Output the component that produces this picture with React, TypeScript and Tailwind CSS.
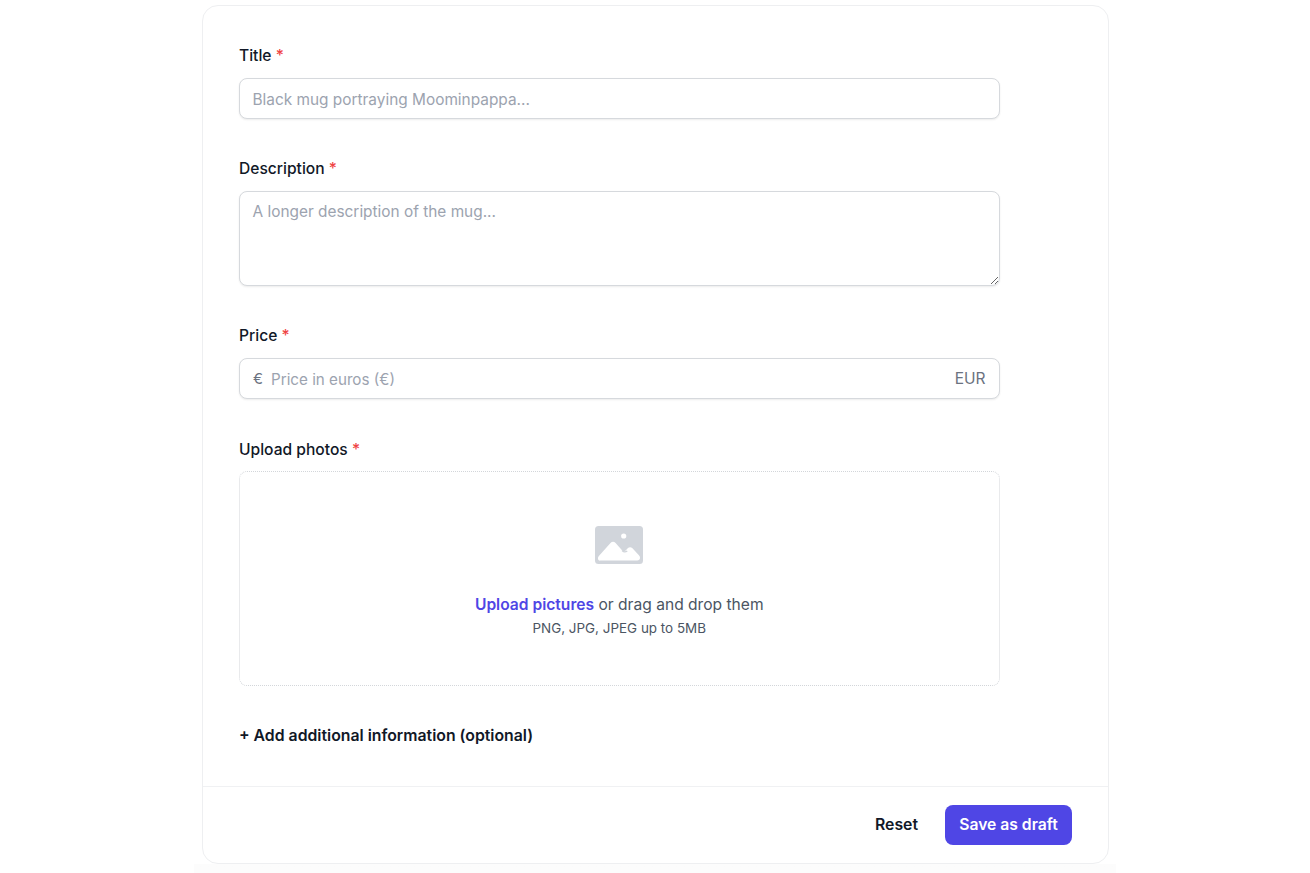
export default function App() {
  const font = "font-['Inter','Liberation_Sans',sans-serif]";
  const Label = ({ text, className = "" }: { text: string; className?: string }) => (
    <label className={`block text-[15.6px] leading-6 pt-[2px] font-medium text-[#111827] ${className}`}>
      {text} <span className="text-[#ef4444]">*</span>
    </label>
  );
  const inputBox =
    "w-full rounded-lg border border-[#d6d9dd] bg-white shadow-[0_1px_2px_rgba(0,0,0,0.08)] text-[15.4px] text-[#111827] placeholder:text-[#9ca3af] outline-none";
  return (
    <div className={`h-[873px] overflow-hidden bg-white ${font}`}>
      <div className="mx-auto w-[922px] h-[873px] bg-gradient-to-b from-white from-[99%] to-[#fcfcfc] to-[99%] px-2 pt-[5px]">
        <form className="w-[907px] h-[859px] rounded-2xl border border-[#eeeff1] bg-white flex flex-col">
          <div className="flex-1 pl-9 pr-[108.500px] pt-[36px]">
            <Label text="Title" />
            <input
              placeholder="Black mug portraying Moominpappa..."
              className={`${inputBox} mt-[10px] h-[41px] px-[12.500px] pt-[2px]`}
            />

            <Label text="Description" className="mt-[36px]" />
            <textarea
              placeholder="A longer description of the mug..."
              className={`${inputBox} mt-[10px] h-[95px] block px-[12.500px] pt-[7.500px] pb-2 leading-6 resize-y`}
            />

            <Label text="Price" className="mt-[36px]" />
            <div className={`${inputBox} mt-[10px] h-[41px] flex items-center px-[13px]`}>
              <span className="text-[#6b7280] w-[18px] text-[15px] pt-px">€</span>
              <input
                placeholder="Price in euros (€)"
                className="flex-1 min-w-0 bg-transparent outline-none pt-[3px] text-[15.2px] text-[#111827] placeholder:text-[#9ca3af]"
              />
              <span className="text-[#6b7280] text-[15.5px] pt-px">EUR</span>
            </div>

            <Label text="Upload photos" className="mt-[37px]" />
            <div className="mt-[9px] h-[215px] rounded-lg border border-dotted border-[#d3d6da] flex flex-col items-center pt-[54px]">
              <svg width="48" height="38" viewBox="0 0 48 38" aria-hidden="true">
                <rect width="48" height="38" rx="3.5" fill="#d1d5db" />
                <circle cx="28.7" cy="10" r="2.6" fill="#fff" />
                <path
                  d="M3 32.500c0-1.200.5-2 1.300-2.900L15.500 17c1.500-1.700 3.600-1.700 5.100 0l6.200 7c1.500 1.700 2.700 1.800 3.800.5l2.400-2.400c1.200-1.200 3-1.200 4.200 0l6.500 6.900c.8.9 1.300 1.700 1.300 3 0 1.600-1.200 2.500-2.800 2.500H5.800C4.200 35 3 34.100 3 32.500z"
                  fill="#fff"
                />
                <path d="M27 24.500c2 2.200 4 1.500 5.300.500" stroke="#d1d5db" strokeWidth="1.200" fill="none" />
              </svg>
              <p className="mt-[29px] text-[15.6px] leading-6 text-[#4b5563]">
                <span className="font-semibold text-[#4f46e5]">Upload pictures</span> or drag and drop them
              </p>
              <p className="mt-[1px] text-[13.450px] leading-[20px] text-[#4b5563]">PNG, JPG, JPEG up to 5MB</p>
            </div>

            <button type="button" className="block mt-[38px] text-[15.8px] leading-6 font-semibold text-[#111827]">
              + Add additional information (optional)
            </button>
          </div>

          <div className="h-[77px] border-t border-[#f0f1f3] flex items-center justify-end gap-[27px] pr-9">
            <button type="button" className="text-[15.8px] font-semibold text-[#111827]">Reset</button>
            <button type="button" className="h-10 w-[127px] rounded-lg bg-[#4f46e5] text-[15.7px] font-semibold text-white">
              Save as draft
            </button>
          </div>
        </form>
      </div>
    </div>
  );
}
